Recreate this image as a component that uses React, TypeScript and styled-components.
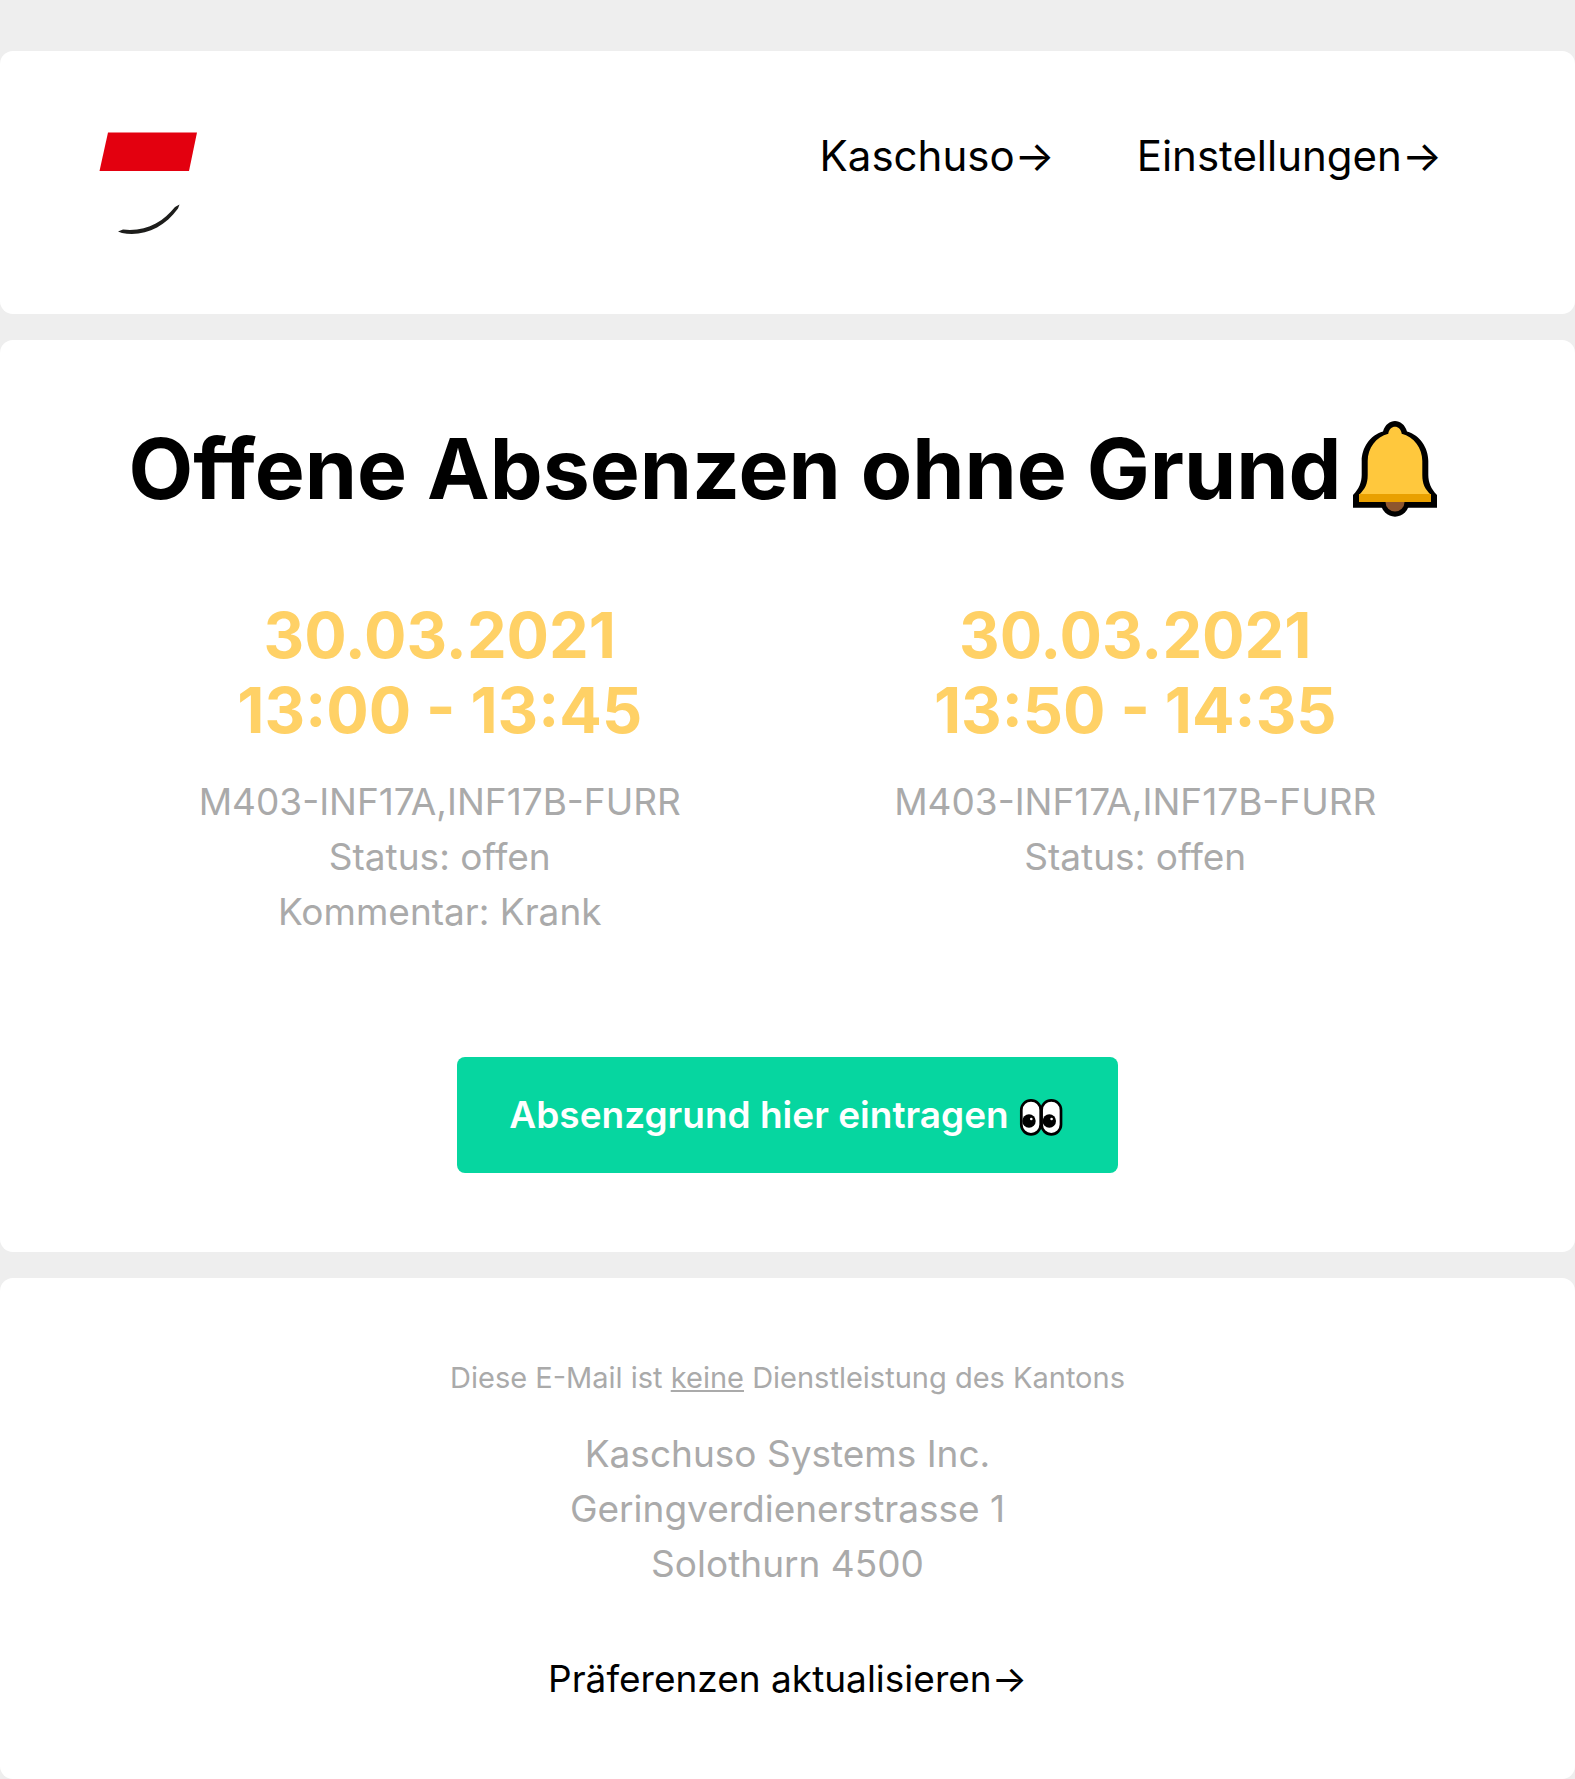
import React from "react";
import styled, { createGlobalStyle } from "styled-components";

const GlobalStyle = createGlobalStyle`
  *, *::before, *::after { box-sizing: border-box; }
  body {
    margin: 0;
    background: #eeeeee;
    color: #000;
    font-family: Inter, "Liberation Sans", sans-serif;
  }
`;

const Page = styled.div`
  display: flex;
  flex-direction: column;
  gap: 26px;
  padding-top: 51px;
`;

const cardStyle = `
  background: #fff;
  border-radius: 13px;
`;

const Header = styled.header`
  ${cardStyle}
  display: flex;
  justify-content: space-between;
  align-items: flex-start;
  padding: 73px 92px 78px;
`;

const Logo = styled.svg`
  display: block;
  width: 112px;
  height: 112px;
`;

const Nav = styled.nav`
  display: flex;
  gap: 82px;
  padding-right: 41px;
`;

const ArrowLink = styled.a<{ $size: number }>`
  color: #000;
  font-size: ${(p) => p.$size}px;
  line-height: 1.5;
  text-decoration: none;
`;

const Main = styled.main`
  ${cardStyle}
  display: flex;
  flex-direction: column;
  align-items: center;
  padding: 78px 92px 79px;
`;

const Title = styled.h1`
  display: flex;
  align-items: center;
  margin: 0 0 79px;
  padding-left: 5px;
  font-size: 84px;
  font-weight: 700;
  line-height: 101px;
`;

const BellIcon = styled.svg`
  width: 110px;
  height: 101px;
`;

const Absences = styled.div`
  display: grid;
  grid-template-columns: 1fr 1fr;
  width: 100%;
  margin-bottom: 118px;
  text-align: center;
`;

const AbsenceTime = styled.h2`
  margin: 0 0 26px;
  color: #ffd166;
  font-size: 63px;
  font-weight: 700;
  line-height: 75px;
`;

const Text = styled.p`
  margin: 0;
  color: #aaaaaa;
  font-size: 37px;
  line-height: 55px;
`;

const Notice = styled(Text)`
  margin-bottom: 27px;
  font-size: 29px;
  line-height: 43px;
`;

const Button = styled.button`
  display: flex;
  align-items: center;
  gap: 9px;
  height: 116px;
  padding: 0 52px;
  border: 0;
  border-radius: 8px;
  background: #06d6a0;
  color: #fff;
  font: 600 37px/56px Inter, "Liberation Sans", sans-serif;
  cursor: pointer;
`;

const EyesIcon = styled.svg`
  width: 48px;
  height: 44px;
`;

const Footer = styled.footer`
  ${cardStyle}
  display: flex;
  flex-direction: column;
  align-items: center;
  padding: 78px 92px 72px;
  text-align: center;
`;

const Address = styled(Text).attrs({ as: "address" })`
  margin-bottom: 60px;
  font-style: normal;
`;

type Absence = { date: string; time: string; details: string[] };

const absences: Absence[] = [
  {
    date: "30.03.2021",
    time: "13:00 - 13:45",
    details: ["M403-INF17A,INF17B-FURR", "Status: offen", "Kommentar: Krank"],
  },
  {
    date: "30.03.2021",
    time: "13:50 - 14:35",
    details: ["M403-INF17A,INF17B-FURR", "Status: offen"],
  },
];

const Bell = () => (
  <BellIcon viewBox="5 0 110 101" aria-hidden="true">
    <path d="M46 13.500C50 -0.500 66 -0.500 70 13.500C83 17 91.300 30 91.300 43V57C91.300 64 94 71 100 77V89.700H16V77C22 71 24.700 64 24.700 57V43C24.700 30 33 17 46 13.500Z" />
    <circle cx="58" cy="84.700" r="14" />
    <path d="M48.500 84H67.500A9.500 9.500 0 0 1 48.500 84Z" fill="#8e562e" />
    <path
      d="M51.300 15.800C52.500 6.500 63.500 6.500 64.700 15.800C77 19 85.300 30 85.300 43V57C85.300 66 88 71 94 77H22C28 71 30.700 66 30.700 57V43C30.700 30 39 19 51.300 15.800Z"
      fill="#ffc83d"
    />
    <path d="M22 76H94V84H22Z" fill="#e9a000" />
  </BellIcon>
);

const Eyes = () => (
  <EyesIcon viewBox="0 0 48 44" aria-hidden="true">
    <rect x="3.300" y="7.300" width="19.400" height="34" rx="9.700" fill="#fff" stroke="#000" strokeWidth="2.700" />
    <rect x="23.600" y="7.300" width="19.400" height="34" rx="9.700" fill="#fff" stroke="#000" strokeWidth="2.700" />
    <circle cx="11" cy="28" r="6.700" />
    <circle cx="31.300" cy="28" r="6.700" />
    <circle cx="13.300" cy="26" r="1.300" fill="#fff" />
    <circle cx="33.600" cy="26" r="1.300" fill="#fff" />
  </EyesIcon>
);

export default function App() {
  return (
    <>
      <GlobalStyle />
      <Page>
        <Header>
          <Logo viewBox="0 0 112 112" role="img" aria-label="Kaschuso">
            <path d="M16 8.500H105L97 47H7.500Z" fill="#e3000f" />
            <path
              d="M26 107.500L31 105.500C54 108 71 98 83 83L87.500 80.500L86 84.500C72 104 51 113 30 109Z"
              fill="#1d1d1b"
            />
          </Logo>
          <Nav>
            <ArrowLink href="#kaschuso" $size={42}>Kaschuso→</ArrowLink>
            <ArrowLink href="#einstellungen" $size={42}>Einstellungen→</ArrowLink>
          </Nav>
        </Header>
        <Main>
          <Title>
            Offene Absenzen ohne Grund
            <Bell />
          </Title>
          <Absences>
            {absences.map((a) => (
              <section key={a.time}>
                <AbsenceTime>
                  {a.date}
                  <br />
                  {a.time}
                </AbsenceTime>
                {a.details.map((d) => (
                  <Text key={d}>{d}</Text>
                ))}
              </section>
            ))}
          </Absences>
          <Button type="button">
            Absenzgrund hier eintragen
            <Eyes />
          </Button>
        </Main>
        <Footer>
          <Notice>
            Diese E-Mail ist <u>keine</u> Dienstleistung des Kantons
          </Notice>
          <Address>
            Kaschuso Systems Inc.
            <br />
            Geringverdienerstrasse 1
            <br />
            Solothurn 4500
          </Address>
          <ArrowLink href="#praeferenzen" $size={37}>Präferenzen aktualisieren→</ArrowLink>
        </Footer>
      </Page>
    </>
  );
}
